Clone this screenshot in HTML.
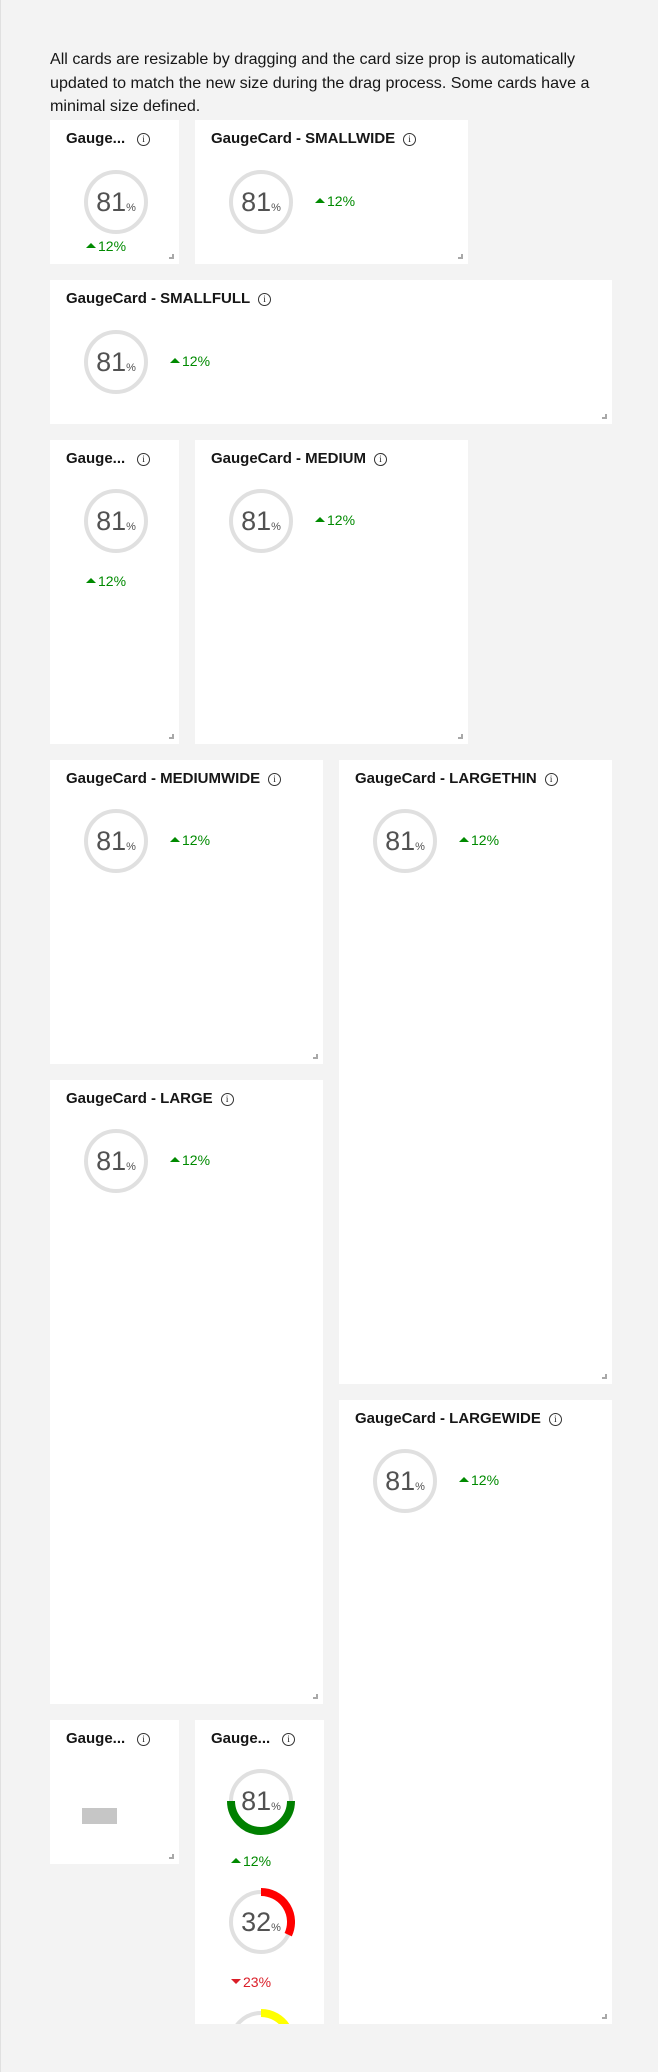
<!DOCTYPE html>
<html><head><meta charset="utf-8"><style>
*{box-sizing:border-box;margin:0;padding:0}
body{width:658px;height:2072px;background:#f3f3f3;font-family:"Liberation Sans",sans-serif;position:relative;overflow:hidden;border-left:1px solid #e0e0e0}
.p{position:absolute;left:49px;top:48px;width:600px;font-size:16.1px;line-height:23.7px;color:#161616;white-space:nowrap}
.c{position:absolute;background:#fff;overflow:hidden}
.t{position:absolute;left:16px;top:10px;font-size:15px;font-weight:bold;color:#161616;white-space:nowrap;line-height:18px}
.i{display:inline-block;width:13px;height:13px;border:1px solid #333;border-radius:50%;font-size:9px;line-height:11px;text-align:center;font-weight:normal;vertical-align:1px;margin-left:8px;font-family:"Liberation Serif",serif}
.g{position:absolute;width:68px;height:68px}
.n{position:absolute;left:0;top:0;width:68px;height:68px;text-align:center;line-height:68px;font-size:27px;color:#525252}
.n small{font-size:11px}
.tr{position:absolute;font-size:14px;color:#008a00;white-space:nowrap}
.tr.r{color:#da1e28}
.tri{display:inline-block;width:0;height:0;border-left:5px solid transparent;border-right:5px solid transparent;border-bottom:5px solid #008a00;vertical-align:3px;margin-right:2px}
.r .tri{border-bottom:none;border-top:5px solid #da1e28}
.h{position:absolute;right:5px;bottom:5px;width:5px;height:5px;border-right:2px solid #a8a8a8;border-bottom:2px solid #a8a8a8}
</style></head><body>
<div class="p">All cards are resizable by dragging and the card size prop is automatically<br>updated to match the new size during the drag process. Some cards have a<br>minimal size defined.</div>

<div class="c" style="left:49px;top:120px;width:129px;height:144px"><div class="t">Gauge...<span class="i" style="margin-left:12px">i</span></div>
<div class="g" style="left:32px;top:48px"><svg width="68" height="68"><circle cx="34" cy="34" r="30" fill="none" stroke="#e0e0e0" stroke-width="4"/></svg><div class="n">81<small>%</small></div></div>
<div class="tr" style="left:36px;top:118px"><span class="tri"></span>12%</div><div class="h"></div></div>

<div class="c" style="left:194px;top:120px;width:273px;height:144px"><div class="t">GaugeCard - SMALLWIDE<span class="i">i</span></div>
<div class="g" style="left:32px;top:48px"><svg width="68" height="68"><circle cx="34" cy="34" r="30" fill="none" stroke="#e0e0e0" stroke-width="4"/></svg><div class="n">81<small>%</small></div></div>
<div class="tr" style="left:120px;top:73px"><span class="tri"></span>12%</div><div class="h"></div></div>

<div class="c" style="left:49px;top:280px;width:562px;height:144px"><div class="t">GaugeCard - SMALLFULL<span class="i">i</span></div>
<div class="g" style="left:32px;top:48px"><svg width="68" height="68"><circle cx="34" cy="34" r="30" fill="none" stroke="#e0e0e0" stroke-width="4"/></svg><div class="n">81<small>%</small></div></div>
<div class="tr" style="left:120px;top:73px"><span class="tri"></span>12%</div><div class="h"></div></div>

<div class="c" style="left:49px;top:440px;width:129px;height:304px"><div class="t">Gauge...<span class="i" style="margin-left:12px">i</span></div>
<div class="g" style="left:32px;top:47px"><svg width="68" height="68"><circle cx="34" cy="34" r="30" fill="none" stroke="#e0e0e0" stroke-width="4"/></svg><div class="n">81<small>%</small></div></div>
<div class="tr" style="left:36px;top:133px"><span class="tri"></span>12%</div><div class="h"></div></div>

<div class="c" style="left:194px;top:440px;width:273px;height:304px"><div class="t">GaugeCard - MEDIUM<span class="i">i</span></div>
<div class="g" style="left:32px;top:47px"><svg width="68" height="68"><circle cx="34" cy="34" r="30" fill="none" stroke="#e0e0e0" stroke-width="4"/></svg><div class="n">81<small>%</small></div></div>
<div class="tr" style="left:120px;top:72px"><span class="tri"></span>12%</div><div class="h"></div></div>

<div class="c" style="left:49px;top:760px;width:273px;height:304px"><div class="t">GaugeCard - MEDIUMWIDE<span class="i">i</span></div>
<div class="g" style="left:32px;top:47px"><svg width="68" height="68"><circle cx="34" cy="34" r="30" fill="none" stroke="#e0e0e0" stroke-width="4"/></svg><div class="n">81<small>%</small></div></div>
<div class="tr" style="left:120px;top:72px"><span class="tri"></span>12%</div><div class="h"></div></div>

<div class="c" style="left:338px;top:760px;width:273px;height:624px"><div class="t">GaugeCard - LARGETHIN<span class="i">i</span></div>
<div class="g" style="left:32px;top:47px"><svg width="68" height="68"><circle cx="34" cy="34" r="30" fill="none" stroke="#e0e0e0" stroke-width="4"/></svg><div class="n">81<small>%</small></div></div>
<div class="tr" style="left:120px;top:72px"><span class="tri"></span>12%</div><div class="h"></div></div>

<div class="c" style="left:49px;top:1080px;width:273px;height:624px"><div class="t">GaugeCard - LARGE<span class="i">i</span></div>
<div class="g" style="left:32px;top:47px"><svg width="68" height="68"><circle cx="34" cy="34" r="30" fill="none" stroke="#e0e0e0" stroke-width="4"/></svg><div class="n">81<small>%</small></div></div>
<div class="tr" style="left:120px;top:72px"><span class="tri"></span>12%</div><div class="h"></div></div>

<div class="c" style="left:338px;top:1400px;width:273px;height:624px"><div class="t">GaugeCard - LARGEWIDE<span class="i">i</span></div>
<div class="g" style="left:32px;top:47px"><svg width="68" height="68"><circle cx="34" cy="34" r="30" fill="none" stroke="#e0e0e0" stroke-width="4"/></svg><div class="n">81<small>%</small></div></div>
<div class="tr" style="left:120px;top:72px"><span class="tri"></span>12%</div><div class="h"></div></div>

<div class="c" style="left:49px;top:1720px;width:129px;height:144px"><div class="t">Gauge...<span class="i" style="margin-left:12px">i</span></div>
<div style="position:absolute;left:32px;top:88px;width:35px;height:16px;background:#c6c6c6"></div><div class="h"></div></div>

<div class="c" style="left:194px;top:1720px;width:129px;height:304px"><div class="t">Gauge...<span class="i" style="margin-left:12px">i</span></div>
<div class="g" style="left:32px;top:47px"><svg width="68" height="68"><circle cx="34" cy="34" r="30" fill="none" stroke="#e0e0e0" stroke-width="4"/><path d="M4 34 A30 30 0 0 0 64 34" fill="none" stroke="#008000" stroke-width="8"/></svg><div class="n">81<small>%</small></div></div>
<div class="tr" style="left:36px;top:133px"><span class="tri"></span>12%</div>
<div class="g" style="left:32px;top:168px"><svg width="68" height="68"><circle cx="34" cy="34" r="30" fill="none" stroke="#e0e0e0" stroke-width="4"/><path d="M34 4 A30 30 0 0 1 61.2 46.7" fill="none" stroke="#ff0000" stroke-width="8"/></svg><div class="n">32<small>%</small></div></div>
<div class="tr r" style="left:36px;top:254px"><span class="tri"></span>23%</div>
<div class="g" style="left:32px;top:289px"><svg width="68" height="68"><circle cx="34" cy="34" r="30" fill="none" stroke="#e0e0e0" stroke-width="4"/><path d="M34 4 A30 30 0 0 1 60 19" fill="none" stroke="#ffff00" stroke-width="8"/></svg></div>
</div>
</body></html>
